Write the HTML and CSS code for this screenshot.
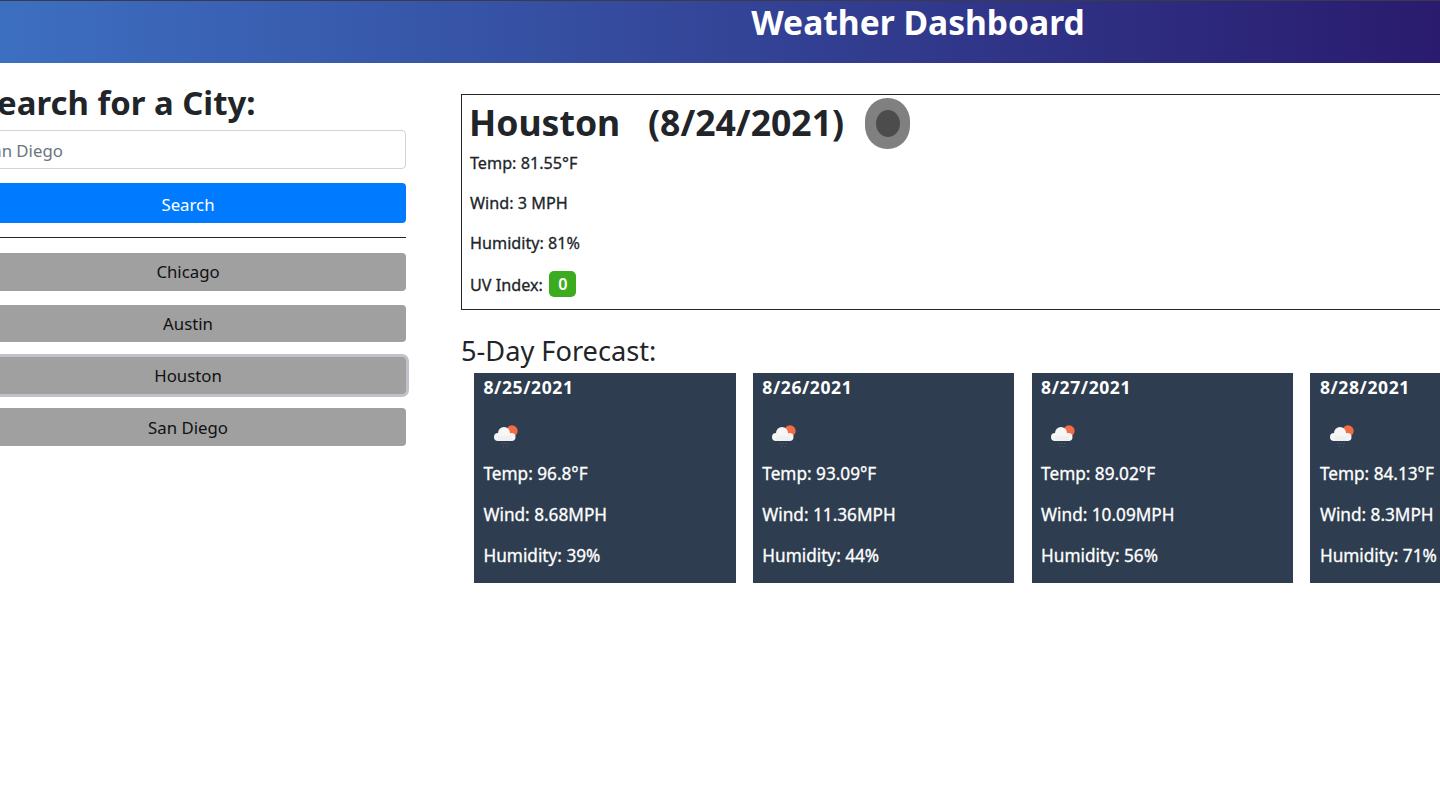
FILE: index.html
```html
<!DOCTYPE html>
<html>
<head>
	<title>Weather Dashboard</title>
	<link rel="stylesheet" href="styles.css">
</head>
<body>
	<svg class="icon-defs" width="0" height="0">
		<symbol id="rain-sun" viewBox="0 0 50 50">
			<circle cx="28" cy="19" r="5.700" fill="#f26c45"/>
			<circle cx="14" cy="25" r="4" fill="#f6f6f6"/>
			<circle cx="20" cy="21" r="6" fill="#f6f6f6"/>
			<circle cx="27.500" cy="25" r="4" fill="#f6f6f6"/>
			<rect x="14" y="24" width="14" height="5" fill="#f0f0f0"/>
			<path d="M18 31v1M21 31v1M24 31v1M19.500 34v1M23 34v1" stroke="#566272" stroke-width="1"/>
		</symbol>
	</svg>

	<header class="topbar">
		<h1>Weather Dashboard</h1>
	</header>

	<div class="page">
		<aside class="sidebar">
			<h2 class="search-title">Search for a City:</h2>
			<input class="search-input" type="text" placeholder="San Diego">
			<button class="btn-search">Search</button>
			<hr class="divider">
			<div class="history">
				<button class="btn-city">Chicago</button>
				<button class="btn-city">Austin</button>
				<button class="btn-city btn-focus">Houston</button>
				<button class="btn-city">San Diego</button>
			</div>
		</aside>

		<main class="results">
			<section class="current">
				<div class="current-head">
					<h2 class="current-title">Houston&nbsp;&nbsp; (8/24/2021)</h2>
					<svg class="current-icon" width="45" height="51" viewBox="0 0 45 51">
						<rect width="45" height="51" rx="22" ry="23" fill="#808080"/>
						<ellipse cx="23" cy="25.500" rx="12" ry="13.500" fill="#4c4c4c"/>
					</svg>
				</div>
				<p>Temp: 81.55°F</p>
				<p>Wind: 3 MPH</p>
				<p>Humidity: 81%</p>
				<p>UV Index: <span class="uv">0</span></p>
			</section>

			<h3 class="forecast-title">5-Day Forecast:</h3>
			<div class="forecast">
				<div class="day">
					<h4>8/25/2021</h4>
					<svg class="day-icon" width="50" height="50"><use href="#rain-sun"/></svg>
					<p>Temp: 96.8°F</p>
					<p>Wind: 8.68MPH</p>
					<p>Humidity: 39%</p>
				</div>
				<div class="day">
					<h4>8/26/2021</h4>
					<svg class="day-icon" width="50" height="50"><use href="#rain-sun"/></svg>
					<p>Temp: 93.09°F</p>
					<p>Wind: 11.36MPH</p>
					<p>Humidity: 44%</p>
				</div>
				<div class="day">
					<h4>8/27/2021</h4>
					<svg class="day-icon" width="50" height="50"><use href="#rain-sun"/></svg>
					<p>Temp: 89.02°F</p>
					<p>Wind: 10.09MPH</p>
					<p>Humidity: 56%</p>
				</div>
				<div class="day">
					<h4>8/28/2021</h4>
					<svg class="day-icon" width="50" height="50"><use href="#rain-sun"/></svg>
					<p>Temp: 84.13°F</p>
					<p>Wind: 8.3MPH</p>
					<p>Humidity: 71%</p>
				</div>
			</div>
		</main>
	</div>
</body>
</html>
```

FILE: styles.css
```css
html, body {
	height: 100%;
	overflow: hidden;
}

body {
	font-family: "Noto Sans", "Open Sans", sans-serif;
	margin: 0;
	padding: 0;
	background-color: white;
	color: #212529;
	font-size: 16.2px;
}

.icon-defs {
	display: block;
}

.topbar {
	height: 63px;
	box-sizing: border-box;
	border-top: 1px solid #3a3a4a;
	background: linear-gradient(to right, #3d6fc1, #2a1b6e);
	display: flex;
	justify-content: center;
	padding-left: 396px;
}

.topbar h1 {
	margin: 0;
	color: white;
	font-size: 33.6px;
	line-height: 42px;
	font-weight: 700;
}

.page {
	display: flex;
	margin-left: -30px;
	width: 1800px;
}

.sidebar {
	width: 436px;
	flex-shrink: 0;
	padding-top: 18px;
}

.search-title {
	margin: 0 0 6px 9px;
	font-size: 32.9px;
	line-height: 43px;
	font-weight: 700;
}

.search-input {
	display: block;
	width: 100%;
	height: 39px;
	box-sizing: border-box;
	padding: 1px 12px 0;
	border: 1px solid #ced4da;
	border-radius: 4px;
	font-family: inherit;
	font-size: 16.8px;
}

.search-input::placeholder {
	color: #6c757d;
}

.btn-search {
	display: block;
	width: 100%;
	height: 40px;
	margin-top: 14px;
	padding-top: 3px;
	border: none;
	border-radius: 4px;
	background-color: #007bff;
	color: white;
	font-family: inherit;
	font-size: 16.8px;
}

.divider {
	margin: 14px 0 15px;
	border: none;
	border-top: 1px solid #212529;
}

.history {
	display: flex;
	flex-direction: column;
	gap: 14.25px;
}

.btn-city {
	height: 37.5px;
	border: none;
	border-radius: 4px;
	background-color: #a0a0a0;
	color: #111;
	font-family: inherit;
	font-size: 16.8px;
}

.btn-focus {
	box-shadow: 0 0 0 3px #bfc3c9;
}

.results {
	margin-left: 55px;
	padding-top: 31px;
	flex: 1;
}

.current {
	height: 216px;
	box-sizing: border-box;
	border: 1px solid #212529;
	padding: 3px 8px 0;
}

.current-head {
	display: flex;
	align-items: flex-start;
	gap: 21px;
	height: 53px;
}

.current-title {
	margin: 0 0 0 -1px;
	font-size: 35.6px;
	line-height: 48px;
	font-weight: 700;
}

.current p {
	margin: 0 0 16px;
	line-height: 24px;
	-webkit-text-stroke: 0.3px;
}

.uv {
	display: inline-block;
	margin-left: 2px;
	padding: 0 9px;
	line-height: 26px;
	vertical-align: 1px;
	border-radius: 5px;
	background-color: #3dab1e;
	color: white;
	font-weight: 600;
	-webkit-text-stroke: 0;
}

.forecast-title {
	margin: 20px 0 2px;
	font-size: 27.2px;
	line-height: 41px;
	font-weight: 400;
}

.forecast {
	display: flex;
	gap: 17.3px;
	margin-left: 13px;
}

.day {
	width: 261.5px;
	height: 210px;
	flex-shrink: 0;
	box-sizing: border-box;
	padding: 2px 9.500px 0;
	background-color: #2e3e50;
	color: white;
}

.day h4 {
	margin: 0;
	font-size: 17.5px;
	line-height: 24px;
	font-weight: 700;
	letter-spacing: 0.6px;
}

.day-icon {
	display: block;
	margin-top: 13px;
}

.day p {
	margin: 0 0 17px;
	font-size: 17.2px;
	line-height: 24px;
	-webkit-text-stroke: 0.3px;
}
```
